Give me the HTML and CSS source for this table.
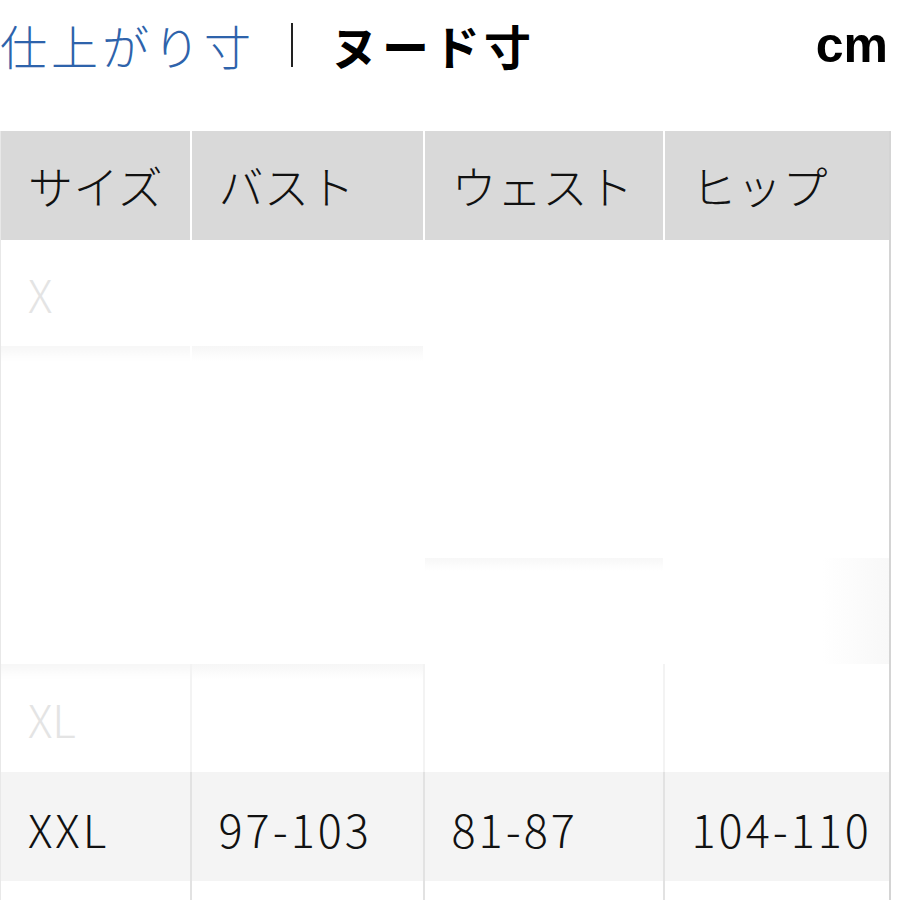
FILE: index.html
```html
<!DOCTYPE html>
<html lang="ja">
<head>
  <meta charset="UTF-8" />
  <meta name="viewport" content="width=device-width, initial-scale=1" />
  <title>サイズ表</title>
  <link rel="stylesheet" href="styles.css">
</head>
<body>
  <div class="page">
    <div class="title-bar">
      <div class="tabs">
        <span class="tab-off">仕上がり寸</span>
        <span class="sep"></span>
        <span class="tab-on">ヌード寸</span>
      </div>
      <span class="unit">cm</span>
    </div>

    <table class="size-table">
      <colgroup>
        <col class="c1">
        <col class="c2">
        <col class="c3">
        <col class="c4">
      </colgroup>
      <tr class="head">
        <th>サイズ</th>
        <th>バスト</th>
        <th>ウェスト</th>
        <th>ヒップ</th>
      </tr>
      <tr class="row erased">
        <td><span class="ghost">X</span></td>
        <td></td>
        <td></td>
        <td></td>
      </tr>
      <tr class="row erased smudge-left">
        <td></td>
        <td></td>
        <td></td>
        <td></td>
      </tr>
      <tr class="row erased">
        <td></td>
        <td></td>
        <td></td>
        <td></td>
      </tr>
      <tr class="row erased smudge-right">
        <td></td>
        <td></td>
        <td></td>
        <td></td>
      </tr>
      <tr class="row erased faint smudge-left last-erased">
        <td><span class="ghost">XL</span></td>
        <td></td>
        <td></td>
        <td></td>
      </tr>
      <tr class="row alt">
        <td>XXL</td>
        <td>97-103</td>
        <td>81-87</td>
        <td>104-110</td>
      </tr>
      <tr class="row">
        <td></td>
        <td></td>
        <td></td>
        <td></td>
      </tr>
    </table>
  </div>
</body>
</html>
```

FILE: styles.css
```css
body {
  margin: 0;
  background-color: #fff;
  color: #111;
  font-family: 'Noto Sans CJK JP', 'Noto Sans', sans-serif;
}
.page {
  width: 900px;
}
.title-bar {
  display: flex;
  align-items: center;
  justify-content: space-between;
  height: 131px;
  padding: 0 12px 42px 0;
  box-sizing: border-box;
}
.tabs {
  display: flex;
  align-items: center;
  font-size: 47px;
  line-height: 1;
}
.tab-off {
  color: #2e63ab;
  font-weight: 300;
  letter-spacing: 4px;
}
.sep {
  display: inline-block;
  width: 2px;
  height: 44px;
  background-color: #222;
  margin: 0 38px 0 36px;
}
.tab-on {
  color: #000;
  font-weight: 700;
  letter-spacing: 4px;
}
.unit {
  font-family: 'Liberation Sans', Arial, sans-serif;
  font-weight: 700;
  font-size: 50px;
  color: #000;
}
.size-table {
  width: 889px;
  border-collapse: collapse;
  table-layout: fixed;
  border-right: 2px solid #d4d4d4;
  border-left: 1px solid #e8e8e8;
}
.c1 { width: 190px; }
.c2 { width: 233px; }
.c3 { width: 240px; }
.c4 { width: 226px; }
.size-table th,
.size-table td {
  text-align: left;
  padding: 0 0 0 27px;
  font-weight: 300;
  white-space: nowrap;
}
.head th {
  height: 109px;
  background-color: #d9d9d9;
  color: #111;
  border-left: 2px solid #fff;
  font-size: 45px;
  letter-spacing: 0.5px;
}
.head th:first-child {
  border-left: none;
}
.row td {
  height: 105px;
  border-left: 2px solid #e2e2e2;
  color: #111;
  font-size: 45px;
  letter-spacing: 3px;
}
.row td:first-child {
  border-left: none;
}
.row.erased td {
  height: 106px;
  border-left-color: #fff;
}
.row.last-erased td {
  height: 108px;
}
.row.faint td {
  border-left-color: #f3f3f3;
}
.smudge-left td:nth-child(-n+2) {
  background: linear-gradient(#f6f6f6, #fff 14%);
}
.smudge-right td:nth-child(n+3) {
  background: linear-gradient(#f7f7f7, #fff 12%);
}
.smudge-right td:last-child {
  background: linear-gradient(90deg, #fff 70%, #f8f8f8);
}
.row.alt td {
  background-color: #f4f4f4;
  padding-top: 4px;
}
.ghost {
  color: #e4e4e4;
  letter-spacing: 0;
}
```
